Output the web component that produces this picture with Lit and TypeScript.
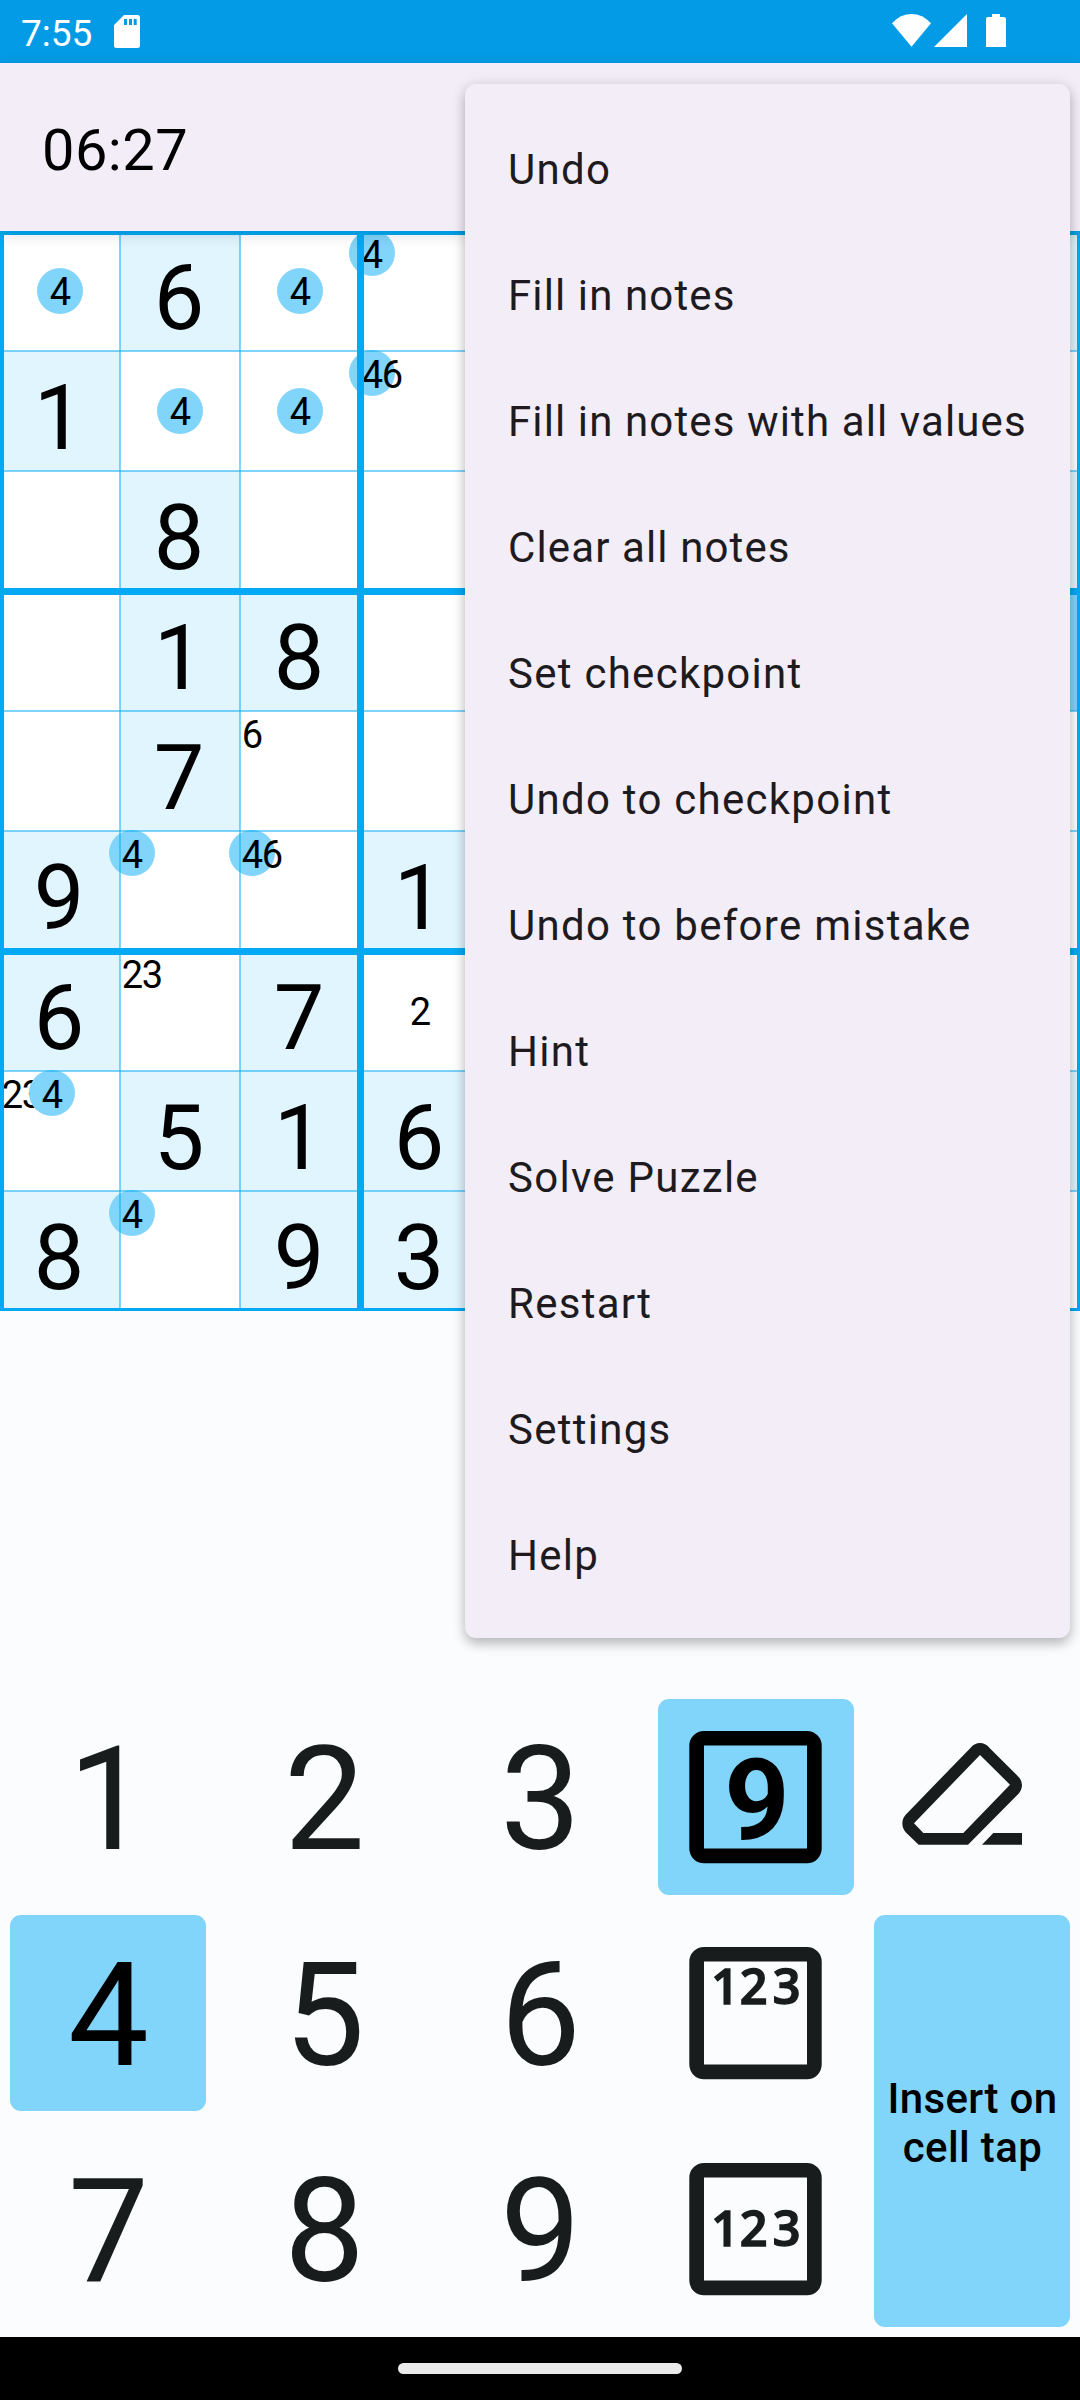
import { LitElement, html, svg, css, nothing } from "lit";
import { customElement, property } from "lit/decorators.js";
import { classMap } from "lit/directives/class-map.js";

type Cell = {
  value?: number;
  given?: boolean;
  selected?: boolean;
  corner?: number[];
  center?: number[];
};

const g = (value?: number): Cell => ({ value, given: true });
const e: Cell = {};
const corner = (...corner: number[]): Cell => ({ corner });
const center = (...center: number[]): Cell => ({ center });

const BOARD: Cell[][] = [
  [center(4), g(6), center(4), corner(4), e, e, e, e, g()],
  [g(1), center(4), center(4), corner(4, 6), e, e, e, e, e],
  [e, g(8), e, e, e, e, e, e, g()],
  [e, g(1), g(8), e, e, e, e, e, { selected: true }],
  [e, g(7), corner(6), e, e, e, e, e, e],
  [g(9), corner(4), corner(4, 6), g(1), e, e, e, e, e],
  [g(6), corner(2, 3), g(7), center(2), e, e, e, e, e],
  [corner(2, 3, 4), g(5), g(1), g(6), e, e, e, e, g()],
  [g(8), corner(4), g(9), g(3), e, e, e, e, e],
];

const MENU: { label: string; tight?: boolean }[] = [
  { label: "Undo" },
  { label: "Fill in notes", tight: true },
  { label: "Fill in notes with all values", tight: true },
  { label: "Clear all notes", tight: true },
  { label: "Set checkpoint" },
  { label: "Undo to checkpoint" },
  { label: "Undo to before mistake" },
  { label: "Hint" },
  { label: "Solve Puzzle" },
  { label: "Restart" },
  { label: "Settings" },
  { label: "Help" },
];

@customElement("status-bar")
export class StatusBar extends LitElement {
  static styles = css`
    :host {
      display: flex;
      align-items: center;
      height: 63px;
      background: #039be5;
      color: #fff;
      font-size: 37px;
    }
    .time {
      padding: 3px 0 0 21px;
      line-height: 63px;
      width: 114px;
      box-sizing: border-box;
    }
    svg {
      display: block;
      fill: #fff;
    }
    .signals {
      margin-left: auto;
    }
  `;
  render() {
    return html`
      <span class="time">7:55</span>
      <svg width="26" height="33" viewBox="0 0 26 33">
        <path
          fill-rule="evenodd"
          d="M10 0H23.5Q26 0 26 2.5V30.5Q26 33 23.5 33H2.5Q0 33 0 30.5V10ZM10 4V10H13V4ZM15 4V10H18V4ZM19.7 4V10H22.7V4Z"
        />
      </svg>
      <svg class="signals" width="188" height="63" viewBox="892 0 188 63">
        <path d="M911.5 46.7L892 23.2Q900.5 14 911.5 14T931 23.2Z" />
        <path d="M934 47L967 14V47Z" />
        <path d="M992 14H1000V17H1004Q1006 17.4 1006 19V47H986V19Q986 17 988 17H992Z" />
      </svg>
    `;
  }
}

@customElement("sudoku-board")
export class SudokuBoard extends LitElement {
  @property({ type: Number }) highlight = 4;

  static styles = css`
    :host {
      display: block;
      position: relative;
      width: 1080px;
      height: 1080px;
      overflow: hidden;
      background: #fff;
      color: #000;
    }
    .grid {
      display: grid;
      grid-template: repeat(9, 120px) / repeat(9, 120px);
    }
    .cell {
      display: flex;
      align-items: center;
      justify-content: center;
    }
    .given {
      background: #e1f5fe;
    }
    .selected {
      background: #81d4fa;
    }
    .value {
      font-size: 90px;
      line-height: 106px;
      padding: 15px 2px 0 0;
    }
    .notes {
      display: flex;
      font-size: 38px;
      line-height: 48px;
    }
    .notes.corner {
      align-self: flex-start;
      margin: -1.5px auto 0 2px;
      line-height: 50px;
    }
    .note {
      position: relative;
      isolation: isolate;
      display: flex;
      justify-content: center;
      width: 20px;
      height: 46px;
    }
    .digit {
      padding-left: 1px;
    }
    .note.on::before {
      content: "";
      position: absolute;
      z-index: -1;
      left: -13px;
      top: 0;
      width: 46px;
      height: 46px;
      border-radius: 50%;
      background: #81d4fa;
    }
    .lines {
      position: absolute;
      inset: 0;
      fill: #03a9f4;
    }
    .thin {
      opacity: 0.5;
    }
  `;

  private notes(list: number[], kind: string) {
    return html`<div class="notes ${kind}">
      ${list.map(
        (n) =>
          html`<span class=${classMap({ note: true, on: n === this.highlight })}><span class="digit">${n}</span></span>`
      )}
    </div>`;
  }

  render() {
    const thin = [1, 2, 4, 5, 7, 8];
    const thick = [0, 3, 6, 9];
    return html`
      <div class="grid">
        ${BOARD.flat().map(
          (c) => html`<div class=${classMap({ cell: true, given: !!c.given, selected: !!c.selected })}>
            ${c.value ? html`<span class="value">${c.value}</span>` : nothing}
            ${c.corner ? this.notes(c.corner, "corner") : nothing}
            ${c.center ? this.notes(c.center, "center") : nothing}
          </div>`
        )}
      </div>
      <svg class="lines" width="1080" height="1080" viewBox="0 0 1080 1080">
        ${thin.map(
          (i) => svg`<rect class="thin" x=${i * 120 - 1} y="0" width="2" height="1080" />
            <rect class="thin" x="0" y=${i * 120 - 1} width="1080" height="2" />`
        )}
        ${thick.map(
          (i) => svg`<rect x=${i * 120 - 3} y="0" width="7" height="1080" />
            <rect x="0" y=${i * 120 - 3} width="1080" height="7" />`
        )}
      </svg>
    `;
  }
}

@customElement("number-pad")
export class NumberPad extends LitElement {
  @property({ type: Number }) active = 4;

  static styles = css`
    :host {
      display: grid;
      grid-template: repeat(3, 196px) / repeat(5, 196px);
      gap: 20px;
      padding: 10px;
      color: #191c1d;
    }
    .key {
      display: flex;
      align-items: center;
      justify-content: center;
      box-sizing: border-box;
      border-radius: 11px;
      font-size: 144px;
      line-height: 168px;
    }
    .digit {
      padding: 6px 0 0 1px;
    }
    .active {
      background: #81d4fa;
      color: #000;
    }
    .tall {
      grid-area: 2 / 5 / 4 / 6;
      text-align: center;
      font-size: 42px;
      line-height: 49px;
      font-weight: 500;
      letter-spacing: 0.35px;
      padding: 4px 0 0 1px;
    }
    svg {
      display: block;
      fill: currentColor;
    }
    .nine {
      font: 700 114px Roboto, sans-serif;
    }
    .small {
      font: 600 48.5px "Open Sans", sans-serif;
      stroke: currentColor;
      stroke-width: 1.5px;
    }
  `;

  private digit(n: number) {
    return html`<div class=${classMap({ key: true, digit: true, active: n === this.active })}>${n}</div>`;
  }

  private mode(kind: "value" | "corner" | "center", active = false) {
    const y = kind === "corner" ? 89 : 115;
    return html`<div class=${classMap({ key: true, active })}>
      <svg width="196" height="196" viewBox="0 0 196 196">
        <path
          fill-rule="evenodd"
          d="M46 32H149A14.7 14.7 0 0 1 163.7 46.7V149.6A14.7 14.7 0 0 1 149 164.3H46A14.7 14.7 0 0 1 31.3 149.6V46.7A14.7 14.7 0 0 1 46 32ZM46 46.5V149.5H149V46.5Z"
        />
        ${kind === "value"
          ? svg`<text class="nine" x="99" y="140" text-anchor="middle">9</text>`
          : svg`<text class="small" y=${y} text-anchor="middle"><tspan x="67">1</tspan><tspan x="95.6">2</tspan><tspan x="128.6">3</tspan></text>`}
      </svg>
    </div>`;
  }

  render() {
    return html`
      ${[1, 2, 3].map((n) => this.digit(n))} ${this.mode("value", true)}
      <div class="key">
        <svg width="196" height="196" viewBox="702 57 588 588">
          <path
            fill-rule="evenodd"
            d="M836 494L797 457Q787 445 787 430T797 404L992 203Q1004 189 1020 189T1048 203L1135 290Q1146 301 1146 315T1135 342L984 494ZM850 459H970L1110 314L1020 225L822 430Z"
          />
          <path d="M1026 494L1060 459H1146V494Z" />
        </svg>
      </div>
      ${[4, 5, 6].map((n) => this.digit(n))} ${this.mode("corner")}
      <div class="key active tall">Insert on<br />cell tap</div>
      ${[7, 8, 9].map((n) => this.digit(n))} ${this.mode("center")}
    `;
  }
}

@customElement("app-root")
export class AppRoot extends LitElement {
  static styles = css`
    :host {
      display: flex;
      flex-direction: column;
      position: relative;
      width: 1080px;
      height: 2400px;
      overflow: hidden;
      background: #fbfcfe;
      font-family: Roboto, "Liberation Sans", sans-serif;
    }
    .toolbar {
      position: relative;
      z-index: 1;
      display: flex;
      align-items: center;
      height: 168px;
      box-sizing: border-box;
      padding: 5px 42px 0;
      background: #f3edf7;
      box-shadow: 0 4px 14px rgba(0, 0, 0, 0.13);
      font-size: 57.75px;
      letter-spacing: 0.45px;
      color: #000;
    }
    number-pad {
      margin-top: auto;
    }
    .navbar {
      display: flex;
      justify-content: center;
      align-items: center;
      height: 63px;
      background: #000;
    }
    .pill {
      width: 284px;
      height: 11px;
      border-radius: 6px;
      background: #ebebeb;
    }
    .menu {
      position: absolute;
      z-index: 2;
      left: 465px;
      top: 84px;
      width: 605px;
      height: 1554px;
      box-sizing: border-box;
      padding: 21px 0;
      border-radius: 11px;
      background: #f3edf7;
      box-shadow: 0 6px 12px rgba(0, 0, 0, 0.23), 0 0 16px rgba(0, 0, 0, 0.09);
      color: #1d1b20;
      font-size: 42px;
      letter-spacing: 1.27px;
      white-space: nowrap;
    }
    .item {
      height: 126px;
      line-height: 130px;
      padding-left: 43px;
    }
    .tight {
      letter-spacing: 1.12px;
    }
  `;

  render() {
    return html`
      <status-bar></status-bar>
      <div class="toolbar">06:27</div>
      <sudoku-board></sudoku-board>
      <number-pad></number-pad>
      <div class="navbar"><div class="pill"></div></div>
      <div class="menu">
        ${MENU.map(
          ({ label, tight }) => html`<div class=${classMap({ item: true, tight: !!tight })}>${label}</div>`
        )}
      </div>
    `;
  }
}
